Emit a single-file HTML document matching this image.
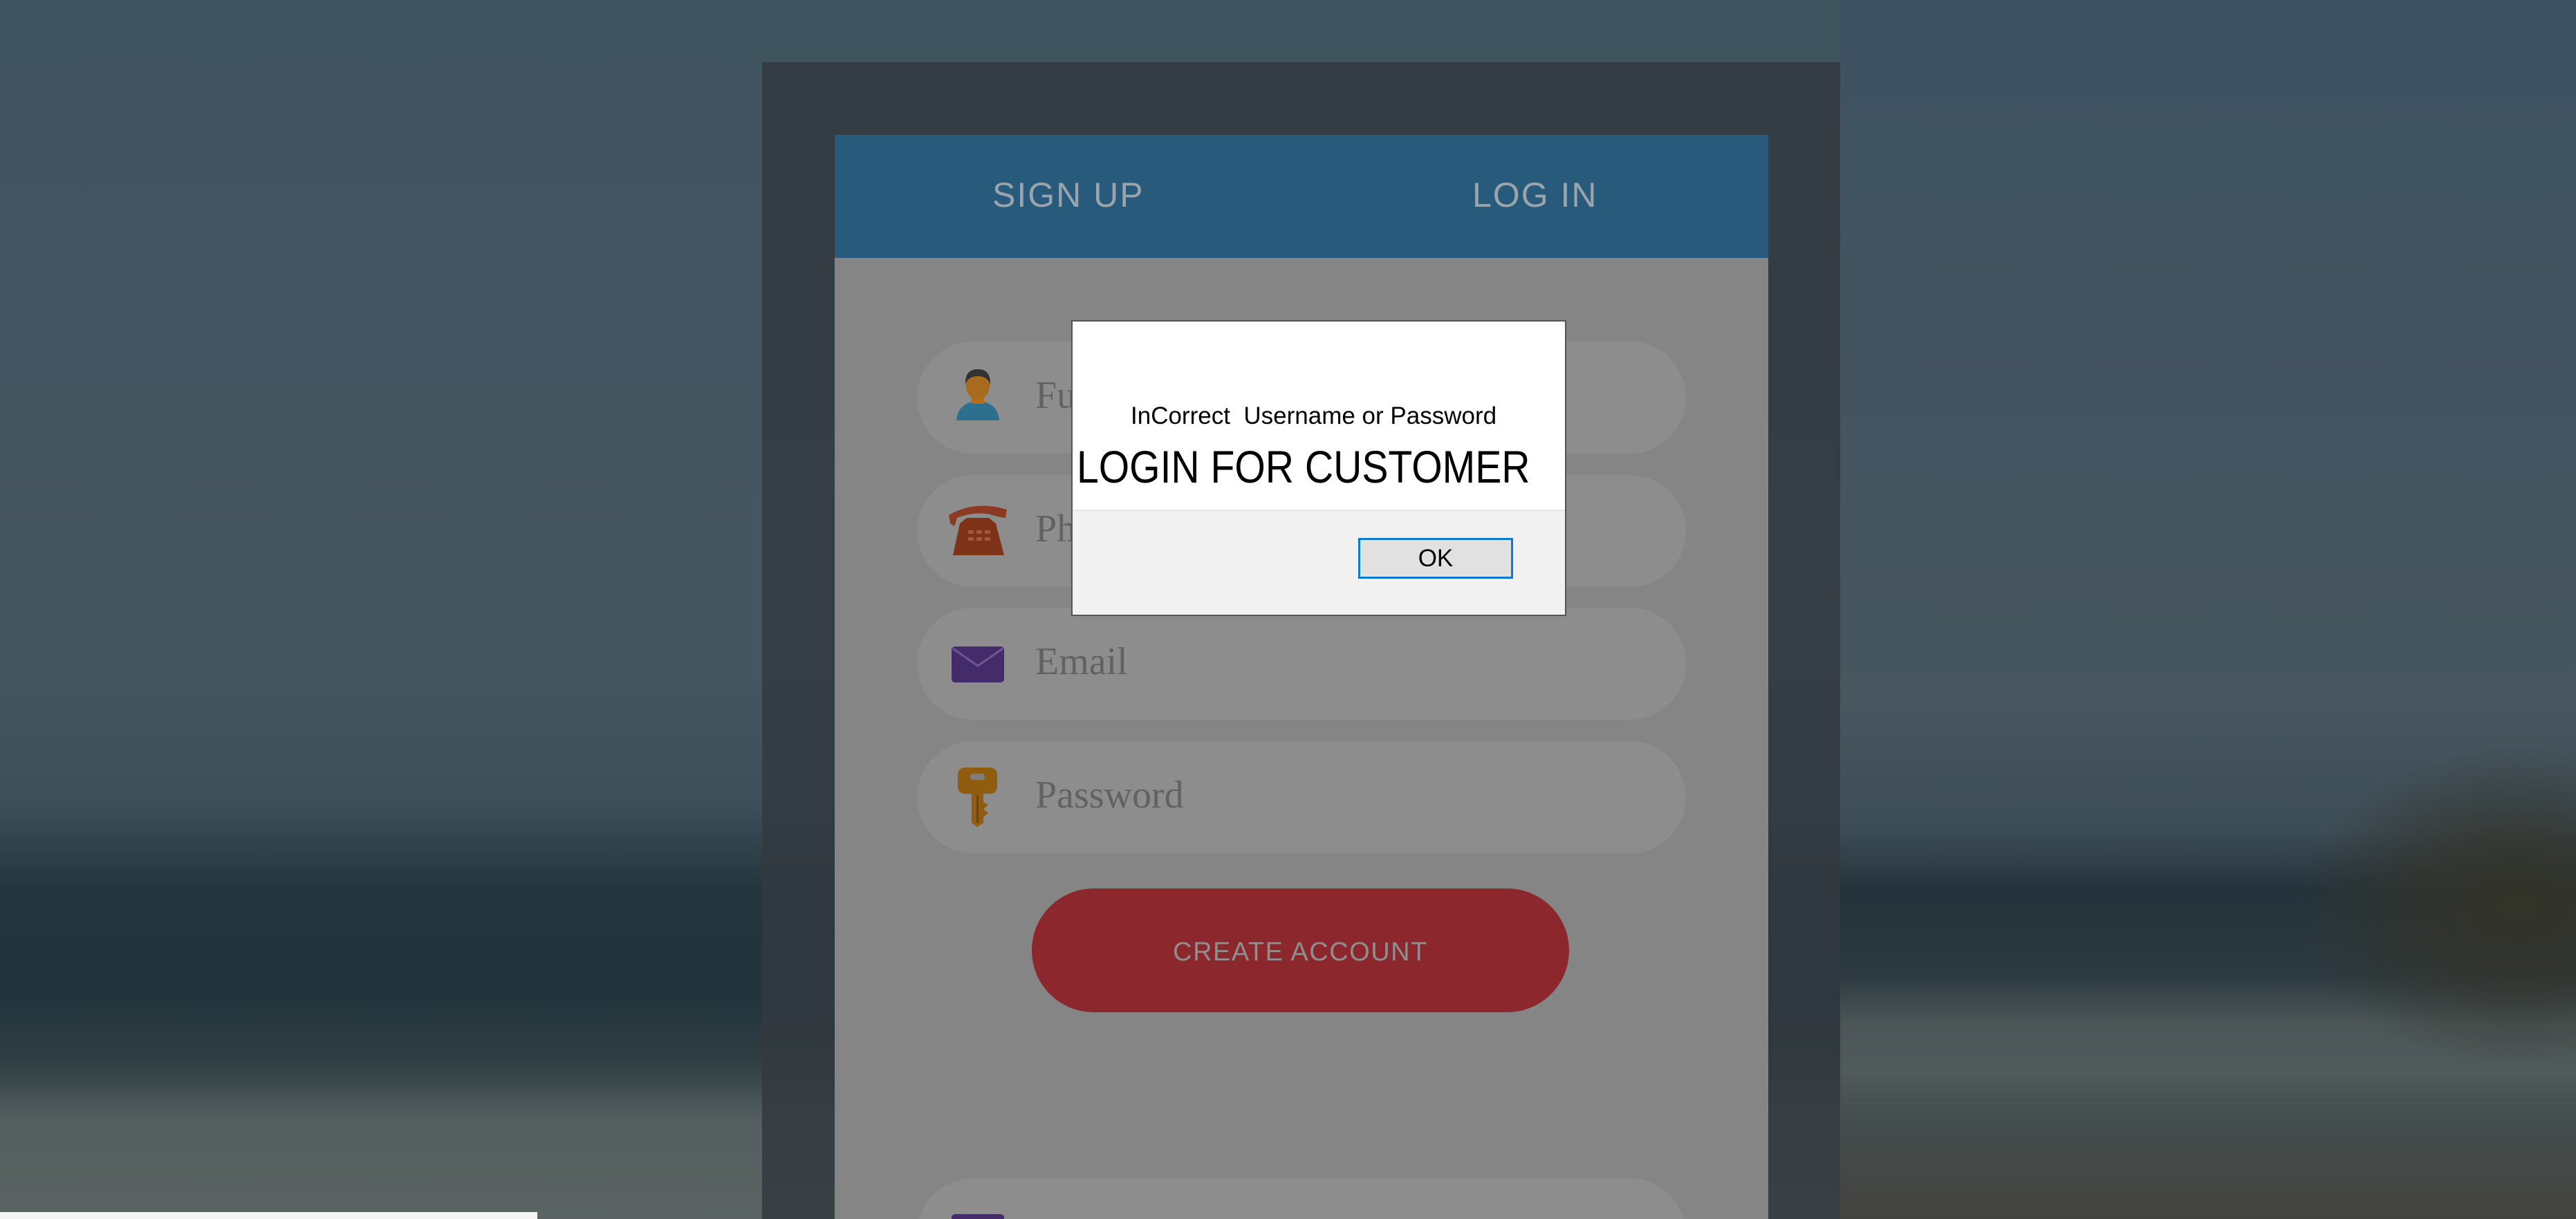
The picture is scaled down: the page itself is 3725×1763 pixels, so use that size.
<!DOCTYPE html>
<html><head><meta charset="utf-8"><style>
*{margin:0;padding:0;box-sizing:border-box}
html,body{width:3725px;height:1763px;overflow:hidden}
body{position:relative;font-family:"Liberation Sans",sans-serif;
background:linear-gradient(180deg,#405460 0%,#465660 55%,#3e4f59 66%,#25353e 73%,#23343c 82%,#2f3e42 87%,#555f60 92%,#5b6462 100%);}
.rt{position:absolute;left:2661px;top:0;width:1064px;height:1763px;overflow:hidden;
background:linear-gradient(180deg,#3e5261 0%,#47565f 58%,#3d4d57 68%,#24333b 73%,#2c3a40 80%,#4c5657 84%,#505a5b 88%,#434d4c 92%,#444340 100%);}
.hill{position:absolute;left:500px;top:1080px;width:800px;height:460px;
background:radial-gradient(ellipse closest-side at 60% 50%,rgba(52,52,40,.95) 0%,rgba(52,52,42,.7) 45%,rgba(52,52,42,0) 100%);}
.panel{position:absolute;left:1102px;top:90px;width:1559px;height:1673px;background:rgba(50,58,64,.85)}
.card{position:absolute;left:1207px;top:195px;width:1350px;height:1568px;background:#858585;overflow:hidden}
.head{position:absolute;left:0;top:0;width:1350px;height:178px;background:#285a7c}
.tab{position:absolute;top:58px;font-size:50px;color:#9aa4ad;letter-spacing:2px}
.inp{position:absolute;left:119px;width:1112px;height:162px;border-radius:81px;background:#8d8d8d}
.ph{position:absolute;left:171px;top:46px;font-family:"Liberation Serif",serif;font-size:56px;color:#626262}
.ic{position:absolute}
.btn{position:absolute;left:285px;top:1090px;width:777px;height:179px;border-radius:90px;background:#8c272d;
color:#8f8f8f;font-size:38px;letter-spacing:1.5px;text-align:center;line-height:185px}
.dlg{position:absolute;left:1549px;top:463px;width:716px;height:428px;background:#f1f1f1;border:2px solid #555}
.dtop{position:absolute;left:0;top:0;width:712px;height:274px;background:#fff;border-bottom:2px solid #e5e5e5}
.t1{position:absolute;left:84px;top:117px;font-size:35px;color:#000;white-space:nowrap}
.t2{position:absolute;left:6px;top:172px;font-size:66px;color:#000;white-space:nowrap;transform-origin:0 0;transform:scaleX(.865)}
.ok{position:absolute;left:413px;top:313px;width:224px;height:59px;background:#e1e1e1;border:3px solid #0a78d4;
font-size:35px;text-align:center;line-height:53px;color:#000}
.wb{position:absolute;left:0;top:1753px;width:777px;height:10px;background:#f5f5f5}
</style></head><body>
<div class="rt"><div class="hill"></div></div>
<div class="panel"></div>
<div class="card">
 <div class="head"><div class="tab" style="left:228px">SIGN UP</div><div class="tab" style="left:922px">LOG IN</div></div>
 <div class="inp" style="top:299px"><div class="ph">Fu</div>
  <svg class="ic" style="left:57px;top:36px" width="62" height="78" viewBox="0 0 62 78">
   <path d="M0 78 Q2 52 31 50 Q60 52 62 78Z" fill="#2d6f8e"/>
   <rect x="22" y="40" width="18" height="14" fill="#b96d15"/>
   <ellipse cx="31" cy="28" rx="17" ry="20" fill="#a86a1d"/>
   <path d="M13 26 Q12 4 31 4 Q50 4 49 26 Q45 14 31 14 Q17 14 13 26Z" fill="#333"/>
  </svg></div>
 <div class="inp" style="top:492px"><div class="ph">Ph</div>
  <svg class="ic" style="left:44px;top:40px" width="88" height="80" viewBox="0 0 88 80">
   <path d="M2 18 Q40 -4 86 10 L84 22 L72 20 Q44 10 14 22 L10 34 L4 30Z" fill="#8d3a22"/>
   <path d="M18 30 L28 22 L60 22 L70 30 L82 76 L8 76Z" fill="#7e3218"/>
   <g fill="#a2583f"><rect x="30" y="40" width="8" height="5"/><rect x="42" y="40" width="8" height="5"/><rect x="54" y="40" width="8" height="5"/><rect x="30" y="50" width="8" height="5"/><rect x="42" y="50" width="8" height="5"/><rect x="54" y="50" width="8" height="5"/></g>
  </svg></div>
 <div class="inp" style="top:684px"><div class="ph">Email</div>
  <svg class="ic" style="left:50px;top:56px" width="76" height="52" viewBox="0 0 76 52">
   <rect x="0" y="0" width="76" height="52" rx="5" fill="#432c69"/>
   <path d="M2 3 L38 28 L74 3" stroke="#6e5591" stroke-width="3" fill="none"/>
  </svg></div>
 <div class="inp" style="top:877px"><div class="ph">Password</div>
  <svg class="ic" style="left:59px;top:38px" width="57" height="86" viewBox="0 0 57 86">
   <rect x="0" y="0" width="57" height="38" rx="10" fill="#8f5c10"/>
   <rect x="18" y="9" width="21" height="9" rx="4" fill="#7e7e7e"/>
   <path d="M20 36 L37 36 L37 50 L44 54 L37 60 L44 66 L37 72 L37 80 L28 86 L20 80Z" fill="#8f5c10"/>
   <rect x="27" y="40" width="3" height="40" fill="#6d440c"/>
  </svg></div>
 <div class="btn">CREATE ACCOUNT</div>
 <div class="inp" style="top:1509px">
  <svg class="ic" style="left:50px;top:52px" width="76" height="52" viewBox="0 0 76 52"><rect width="76" height="52" rx="5" fill="#432c69"/></svg></div>
</div>
<div class="dlg">
 <div class="dtop">
  <div class="t1">InCorrect&nbsp; Username or Password</div>
  <div class="t2">LOGIN FOR CUSTOMER</div>
 </div>
 <div class="ok">OK</div>
</div>
<div class="wb"></div>
</body></html>
